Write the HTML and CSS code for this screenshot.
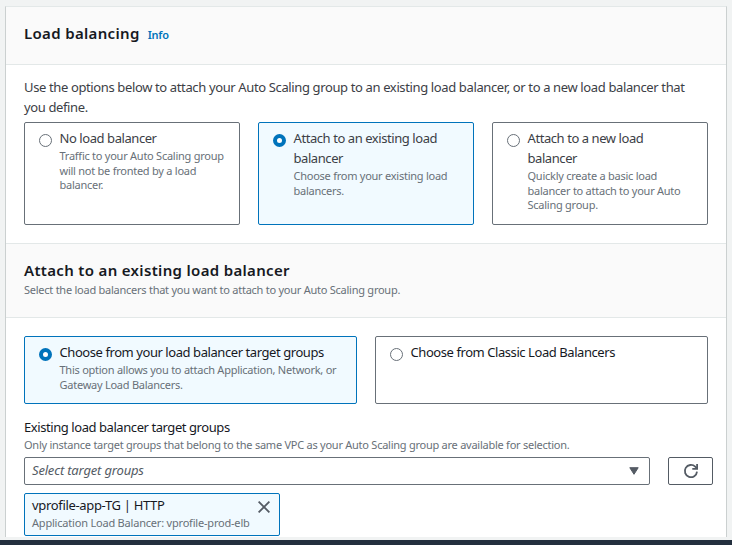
FILE: index.html
```html
<!DOCTYPE html>
<html lang="en">
<head>
<meta charset="utf-8">
<title>Load balancing</title>
<link rel="stylesheet" href="styles.css">
</head>
<body>
<main class="panel">
  <header class="head head-main">
    <h2 class="title">Load balancing</h2>
    <a class="info">Info</a>
  </header>
  <section class="section options">
    <p class="intro">Use the options below to attach your Auto Scaling group to an existing load balancer, or to a new load balancer that<br>you define.</p>
    <div class="tiles three">
      <label class="tile">
        <span class="radio"></span>
        <span class="copy"><span class="name">No load balancer</span><span class="desc">Traffic to your Auto Scaling group<br>will not be fronted by a load<br>balancer.</span></span>
      </label>
      <label class="tile selected">
        <span class="radio"></span>
        <span class="copy"><span class="name">Attach to an existing load<br>balancer</span><span class="desc">Choose from your existing load<br>balancers.</span></span>
      </label>
      <label class="tile">
        <span class="radio"></span>
        <span class="copy"><span class="name">Attach to a new load<br>balancer</span><span class="desc">Quickly create a basic load<br>balancer to attach to your Auto<br>Scaling group.</span></span>
      </label>
    </div>
  </section>
  <header class="head head-sub">
    <h2 class="title">Attach to an existing load balancer</h2>
    <p class="subtitle">Select the load balancers that you want to attach to your Auto Scaling group.</p>
  </header>
  <section class="section groups">
    <div class="tiles two">
      <label class="tile selected">
        <span class="radio"></span>
        <span class="copy"><span class="name">Choose from your load balancer target groups</span><span class="desc">This option allows you to attach Application, Network, or<br>Gateway Load Balancers.</span></span>
      </label>
      <label class="tile">
        <span class="radio"></span>
        <span class="copy"><span class="name">Choose from Classic Load Balancers</span></span>
      </label>
    </div>
    <div class="field-label">Existing load balancer target groups</div>
    <div class="field-hint">Only instance target groups that belong to the same VPC as your Auto Scaling group are available for selection.</div>
    <div class="field-row">
      <div class="select"><span class="placeholder">Select target groups</span>
        <svg width="10" height="8" viewBox="0 0 10 8"><path d="M.8.7h8.4L5 7.3z" fill="#545b64" stroke="#545b64" stroke-linejoin="round"/></svg>
      </div>
      <button class="refresh" aria-label="Refresh">
        <svg width="16" height="16" viewBox="0 0 16 16" fill="none" stroke="#545b64" stroke-width="1.8"><path d="M14 8.6A6.1 6.1 0 1 1 12.2 3.7L14 5.4"/><path d="M14.1 1v4.8H9.3"/></svg>
      </button>
    </div>
    <div class="token">
      <div class="token-copy"><span class="name">vprofile-app-TG | HTTP</span><span class="desc">Application Load Balancer: vprofile-prod-elb</span></div>
      <svg class="close" width="12" height="12" viewBox="0 0 12 12" stroke="#545b64" stroke-width="1.8"><path d="M.6.6l10.8 10.8M11.4.6L.6 11.4"/></svg>
    </div>
  </section>
</main>
<footer class="bar"></footer>
</body>
</html>
```
FILE: styles.css
```css
* { box-sizing: border-box; }
body {
  margin: 0;
  height: 545px;
  overflow: hidden;
  display: flex;
  flex-direction: column;
  background: #f1f3f3;
  font-family: "Noto Sans", sans-serif;
  font-size: 13px;
  line-height: 20px;
  letter-spacing: -.43px;
  color: #16191f;
}
h2, p { margin: 0; }
.panel {
  width: 722px;
  height: 531px;
  flex: none;
  margin: 6px 0 3px 5px;
  background: #fff;
  border: 1px solid #cbd0d0;
  border-top-color: #e3e8e8;
  border-bottom: 0;
  overflow: hidden;
}
.head { background: #fafafa; border-bottom: 1px solid #e3e8e8; padding-left: 18px; }
.head-main { height: 58px; padding-top: 16px; display: flex; align-items: baseline; gap: 8px; }
.head-sub { height: 75px; border-top: 1px solid #e3e8e8; padding-top: 16px; }
.title { font-size: 15px; line-height: 20px; font-weight: 600; letter-spacing: .33px; white-space: nowrap; }
.info { font-size: 11px; font-weight: 600; color: #0073bb; letter-spacing: -.2px; }
.subtitle, .desc, .field-hint { font-size: 11px; line-height: 14.6px; letter-spacing: -.25px; color: #687078; white-space: nowrap; }
.subtitle { margin-top: 3px; }
.section { padding: 0 18px; }
.options { height: 178px; padding-top: 12px; }
.intro { color: #3c4046; white-space: nowrap; letter-spacing: -.37px; }
.tiles { display: grid; gap: 18px; }
.three { grid-template-columns: repeat(3, 216px); grid-template-rows: 103px; margin-top: 5px; }
.two { grid-template-columns: repeat(2, 333px); grid-template-rows: 68px; }
.tile { display: flex; border: 1px solid #687078; border-radius: 2px; padding: 5px 0 0 14px; gap: 7.5px; }
.tile .desc { margin-top: 1px; }
.selected { background: #f1faff; border-color: #0073bb; }
.radio { width: 13px; height: 13px; flex: none; margin-top: 6px; border: 1px solid #687078; border-radius: 50%; background: #fff; }
.selected .radio { border: 4px solid #0073bb; }
.copy, .token-copy { display: flex; flex-direction: column; white-space: nowrap; }
.three .name { color: #3c4046; }
.groups { padding-top: 18px; }
.field-label { margin-top: 13px; }
.field-hint { height: 19px; margin-top: 1px; }
.field-row { display: flex; gap: 18px; height: 28px; }
.select { width: 626px; flex: none; border: 1px solid #687078; border-radius: 2px; padding: 0 10px 0 7px; display: flex; align-items: center; justify-content: space-between; }
.placeholder { font-style: italic; color: #545b64; letter-spacing: -.18px; position: relative; top: -1px; }
.refresh { width: 45px; flex: none; border: 1px solid #545b64; border-radius: 2px; background: #fff; padding: 0; display: grid; place-items: center; }
.token { width: 256px; height: 43px; margin-top: 8px; border: 1px solid #0073bb; border-radius: 2px; background: #f1faff; padding: 1px 9px 0 7px; display: flex; justify-content: space-between; }
.token .name { letter-spacing: -.33px; }
.token .desc { margin-top: 1px; letter-spacing: -.2px; }
.close { margin-top: 6px; }
.bar { height: 5px; flex: none; background: #232f3e; }
```
